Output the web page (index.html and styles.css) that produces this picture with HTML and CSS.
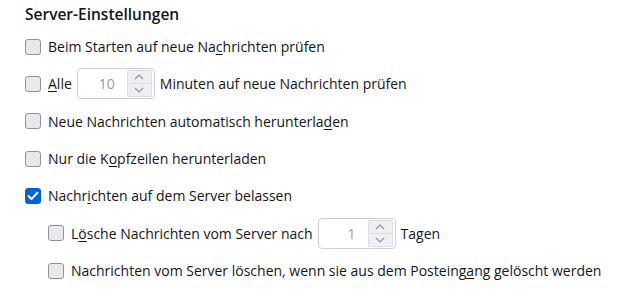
FILE: index.html
```html
<!DOCTYPE html>
<html lang="de">
<head>
<meta charset="utf-8">
<link rel="stylesheet" href="styles.css">
</head>
<body>
<div class="panel">
  <h2 class="title">Server-Einstellungen</h2>
  <div class="rows">
    <div class="row"><span class="cb"></span><span>Beim Starten auf neue Na<u>c</u>hrichten prüfen</span></div>
    <div class="row"><span class="cb"></span><span><u>A</u>lle</span>
      <span class="spin"><span class="val">10</span><span class="btns"><span class="btn"><svg width="10" height="6" viewBox="0 0 10 6"><path d="M1 5 L5 1 L9 5" fill="none" stroke="#8f8f9d" stroke-width="1.2"/></svg></span><span class="btn"><svg width="10" height="6" viewBox="0 0 10 6"><path d="M1 1 L5 5 L9 1" fill="none" stroke="#8f8f9d" stroke-width="1.2"/></svg></span></span></span>
      <span>Minuten auf neue Nachrichten prüfen</span></div>
    <div class="row"><span class="cb"></span><span>Neue Nachrichten automatisch herunterla<u>d</u>en</span></div>
    <div class="row"><span class="cb"></span><span>Nur die K<u>o</u>pfzeilen herunterladen</span></div>
    <div class="row"><span class="cb checked"><svg width="12" height="10" viewBox="0 0 12 10"><path d="M1.5 5 L4.5 8 L10.5 1.8" fill="none" stroke="#fff" stroke-width="2" stroke-linecap="round" stroke-linejoin="round"/></svg></span><span>Nachr<u>i</u>chten auf dem Server belassen</span></div>
    <div class="row sub"><span class="cb"></span><span>L<u>ö</u>sche Nachrichten vom Server nach</span>
      <span class="spin"><span class="val">1</span><span class="btns"><span class="btn"><svg width="10" height="6" viewBox="0 0 10 6"><path d="M1 5 L5 1 L9 5" fill="none" stroke="#8f8f9d" stroke-width="1.2"/></svg></span><span class="btn"><svg width="10" height="6" viewBox="0 0 10 6"><path d="M1 1 L5 5 L9 1" fill="none" stroke="#8f8f9d" stroke-width="1.2"/></svg></span></span></span>
      <span>Tagen</span></div>
    <div class="row sub"><span class="cb"></span><span>Nachrichten vom Server löschen, wenn sie aus dem Postein<u>ga</u>ng gelöscht werden</span></div>
  </div>
</div>
</body>
</html>
```
FILE: styles.css
```css
html, body {
  margin: 0;
  padding: 0;
  background: #ffffff;
}
body {
  font-family: "Open Sans", "Noto Sans", sans-serif;
  font-size: 14px;
  color: #15141a;
}
.panel {
  padding: 0 0 0 25px;
}
.title {
  margin: 0;
  padding-top: 2px;
  font-size: 15.5px;
  font-weight: 600;
  line-height: 24px;
  height: 26px;
}
.rows {
  display: flex;
  flex-direction: column;
}
.row {
  height: 37.33px;
  display: flex;
  align-items: center;
  gap: 5px;
  white-space: nowrap;
}
.row.sub {
  padding-left: 23px;
}
.cb {
  width: 14px;
  height: 14px;
  border: 1px solid #8f8f9d;
  border-radius: 3px;
  background: #e9e9ed;
  flex: none;
  display: flex;
  align-items: center;
  justify-content: center;
  margin-right: 2px;
}
.cb.checked {
  background: #0061e0;
  border-color: #0061e0;
}
u {
  text-decoration-thickness: 1px;
  text-underline-offset: 2px;
}
.spin {
  display: flex;
  width: 76px;
  height: 29px;
  border: 1px solid #cfcfd8;
  border-radius: 4px;
  background: #fff;
  align-items: stretch;
  box-sizing: content-box;
}
.val {
  flex: 1;
  display: flex;
  align-items: center;
  justify-content: flex-end;
  padding-right: 12px;
  color: #9a9aa5;
}
.btns {
  width: 25px;
  margin: 1px 2px 1px 0;
  display: flex;
  flex-direction: column;
  border: 1px solid #dcdce2;
  border-radius: 2px;
  box-sizing: border-box;
}
.btn {
  flex: 1;
  display: flex;
  align-items: center;
  justify-content: center;
  background: #f0f0f4;
}
.btn + .btn {
  border-top: 1px solid #dcdce2;
}
```
